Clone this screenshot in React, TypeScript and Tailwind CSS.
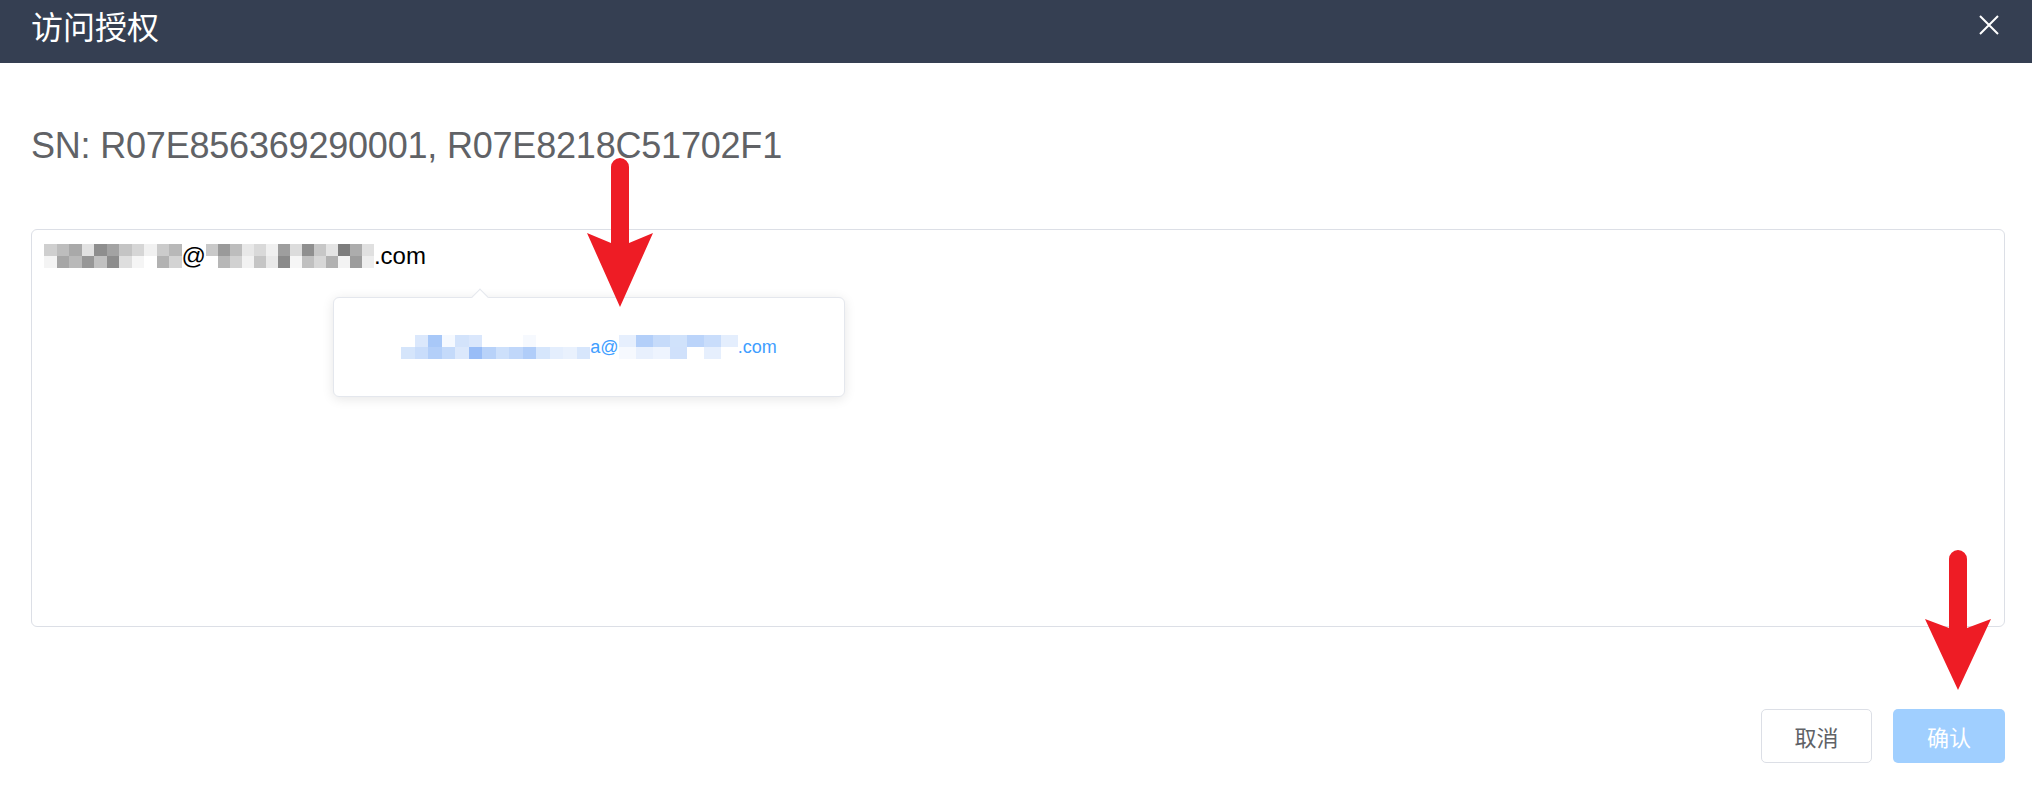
const latin = "font-['Liberation_Sans','Noto_Sans_CJK_SC',sans-serif]";
const cjk = "font-['Noto_Sans_CJK_SC','Liberation_Sans',sans-serif]";

// pixelated blur over the e-mail parts
const grayTop = [
  'bg-[#cfcfcf]', 'bg-[#bdbdbd]', 'bg-[#a9a9a9]', 'bg-[#e2e2e2]', 'bg-[#8e8e8e]', 'bg-[#a3a3a3]',
  'bg-[#c4c4c4]', 'bg-[#d6d6d6]', 'bg-[#f1f1f1]', 'bg-[#cbcbcb]', 'bg-[#b8b8b8]',
];
const grayBottom = [
  'bg-[#f4f4f4]', 'bg-[#a6a6a6]', 'bg-[#b9b9b9]', 'bg-[#979797]', 'bg-[#c1c1c1]', 'bg-[#8d8d8d]',
  'bg-[#dedede]', 'bg-[#f5f5f5]', 'bg-[#ffffff]', 'bg-[#b2b2b2]', 'bg-[#d3d3d3]',
];
const gray2Top = [
  'bg-[#c9c9c9]', 'bg-[#9a9a9a]', 'bg-[#bdbdbd]', 'bg-[#e8e8e8]', 'bg-[#d9d9d9]', 'bg-[#f0f0f0]', 'bg-[#9e9e9e]',
  'bg-[#dcdcdc]', 'bg-[#8f8f8f]', 'bg-[#c7c7c7]', 'bg-[#e4e4e4]', 'bg-[#7d7d7d]', 'bg-[#acacac]', 'bg-[#e0e0e0]',
];
const gray2Bottom = [
  'bg-[#ffffff]', 'bg-[#b7b7b7]', 'bg-[#d1d1d1]', 'bg-[#f2f2f2]', 'bg-[#c5c5c5]', 'bg-[#e9e9e9]', 'bg-[#8a8a8a]',
  'bg-[#f6f6f6]', 'bg-[#c0c0c0]', 'bg-[#d7d7d7]', 'bg-[#b1b1b1]', 'bg-[#f3f3f3]', 'bg-[#9c9c9c]', 'bg-[#ededed]',
];
const blueTop = [
  'bg-[#ffffff]', 'bg-[#dbe8fc]', 'bg-[#a8c8f8]', 'bg-[#f5f9ff]', 'bg-[#d3e3fb]', 'bg-[#dae7fc]', 'bg-[#ffffff]',
  'bg-[#ffffff]', 'bg-[#ffffff]', 'bg-[#f6f9fe]', 'bg-[#ffffff]', 'bg-[#ffffff]', 'bg-[#ffffff]', 'bg-[#ffffff]',
];
const blueBottom = [
  'bg-[#d5e5fb]', 'bg-[#c9ddfb]', 'bg-[#b3cff9]', 'bg-[#c4dafa]', 'bg-[#dbe8fc]', 'bg-[#99bdf7]', 'bg-[#b8d2f9]',
  'bg-[#cde0fb]', 'bg-[#c0d7fa]', 'bg-[#b0cdf9]', 'bg-[#d6e6fc]', 'bg-[#e4eefd]', 'bg-[#e9f1fd]', 'bg-[#d7e6fc]',
];
const blue2Top = [
  'bg-[#e6effd]', 'bg-[#b3cff9]', 'bg-[#c6dbfa]', 'bg-[#d0e2fb]', 'bg-[#bbd4fa]', 'bg-[#c9ddfb]', 'bg-[#e4eefd]',
];
const blue2Bottom = [
  'bg-[#f6f9fe]', 'bg-[#e8f0fd]', 'bg-[#eef4fe]', 'bg-[#d0e1fb]', 'bg-[#ffffff]', 'bg-[#e6effd]', 'bg-[#ffffff]',
];

function Mosaic({ top, bottom, cell }: { top: string[]; bottom: string[]; cell: string }) {
  return (
    <span className="inline-flex flex-col align-middle">
      <span className="flex">
        {top.map((c, i) => (
          <span key={i} className={`${cell} ${c}`} />
        ))}
      </span>
      <span className="flex">
        {bottom.map((c, i) => (
          <span key={i} className={`${cell} ${c}`} />
        ))}
      </span>
    </span>
  );
}

// red annotation arrows drawn over the screenshot
function RedArrow({ className, d }: { className: string; d: string }) {
  return (
    <svg className={`pointer-events-none absolute ${className}`} width="80" height="160" viewBox="0 0 80 160">
      <path d={d} fill="#ee1c25" />
    </svg>
  );
}

export default function App() {
  return (
    <div className={`relative min-h-[798px] w-full bg-white ${latin}`}>
      <header className="flex h-[63px] items-center justify-between bg-[#353f52] pr-[33px] pb-[13px] pl-[31px]">
        <h1 className={`${cjk} text-[32px] leading-none font-normal text-white`}>访问授权</h1>
        <button className="text-white">
          <svg width="20" height="20" viewBox="0 0 20 20" fill="none" stroke="currentColor" strokeWidth="2">
            <path d="M1 1 L19 19 M19 1 L1 19" />
          </svg>
        </button>
      </header>

      <main className="pr-[27px] pl-[31px]">
        <p className="mt-[61px] text-[36px] leading-[44px] tracking-[-0.2px] text-[#606266]">
          SN: R07E856369290001, R07E8218C51702F1
        </p>

        <div className="relative mt-[61px] h-[398px] rounded-[6px] border border-[#dcdfe6] pt-[11px] pl-[12px]">
          <div className="flex items-center text-[24px] leading-[30px] text-black">
            <Mosaic top={grayTop} bottom={grayBottom} cell="h-[12px] w-[12.5px]" />
            <span>@</span>
            <Mosaic top={gray2Top} bottom={gray2Bottom} cell="h-[12px] w-[12px]" />
            <span>.com</span>
          </div>

          <div className="absolute top-[67px] left-[301px] flex h-[100px] w-[512px] items-center justify-center rounded-[6px] border border-[#e4e7ed] bg-white shadow-[0_2px_12px_rgba(0,0,0,0.1)]">
            <span className="absolute -top-[7px] left-[140px] h-[12px] w-[12px] rotate-45 border-t border-l border-[#e4e7ed] bg-white" />
            <div className="flex items-center text-[18px] leading-[22px] text-[#409eff]">
              <Mosaic top={blueTop} bottom={blueBottom} cell="h-[12px] w-[13.5px]" />
              <span>a@</span>
              <Mosaic top={blue2Top} bottom={blue2Bottom} cell="h-[12px] w-[17px]" />
              <span>.com</span>
            </div>
          </div>
        </div>

        <div className={`mt-[82px] flex justify-end gap-[21px] ${cjk}`}>
          <button className="h-[54px] w-[111px] rounded-[5px] border border-[#dcdfe6] bg-white text-[22px] text-[#606266]">
            取消
          </button>
          <button className="h-[54px] w-[112px] rounded-[5px] bg-[#a0cfff] text-[22px] text-white">确认</button>
        </div>
      </main>

      <RedArrow
        className="top-[150px] left-[580px]"
        d="M31 17 a9 9 0 0 1 18 0 L49 93 L73 83 L40 157 L7 83 L31 93 Z"
      />
      <RedArrow
        className="top-[533px] left-[1918px]"
        d="M31 26 a9 9 0 0 1 18 0 L49 95 L73 86 L40 157 L7 86 L31 95 Z"
      />
    </div>
  );
}
